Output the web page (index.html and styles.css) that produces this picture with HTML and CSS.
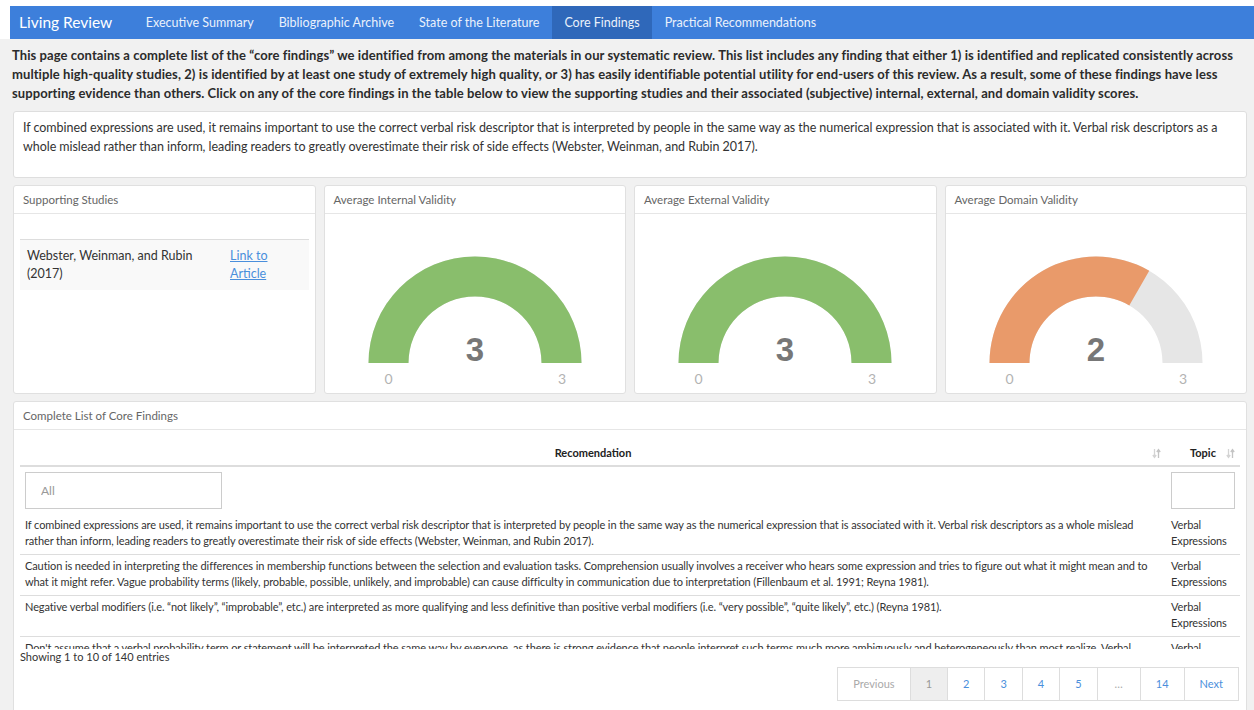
FILE: index.html
```html
<!DOCTYPE html>
<html lang="en">
<head>
<meta charset="utf-8">
<title>Living Review – Core Findings</title>
<link rel="stylesheet" href="styles.css">
</head>
<body>
<header class="top">
  <nav class="navbar">
    <span class="brand">Living Review</span>
    <ul class="nav">
      <li><a class="nav-link" href="#">Executive Summary</a></li>
      <li><a class="nav-link" href="#">Bibliographic Archive</a></li>
      <li><a class="nav-link" href="#">State of the Literature</a></li>
      <li><a class="nav-link active" href="#">Core Findings</a></li>
      <li><a class="nav-link" href="#">Practical Recommendations</a></li>
    </ul>
  </nav>
</header>

<main class="content">
  <p class="intro">This page contains a complete list of the “core findings” we identified from among the materials in our systematic review. This list includes any finding that either 1) is identified and replicated consistently across multiple high-quality studies, 2) is identified by at least one study of extremely high quality, or 3) has easily identifiable potential utility for end-users of this review. As a result, some of these findings have less supporting evidence than others. Click on any of the core findings in the table below to view the supporting studies and their associated (subjective) internal, external, and domain validity scores.</p>

  <div class="finding">
    <p>If combined expressions are used, it remains important to use the correct verbal risk descriptor that is interpreted by people in the same way as the numerical expression that is associated with it. Verbal risk descriptors as a whole mislead rather than inform, leading readers to greatly overestimate their risk of side effects (Webster, Weinman, and Rubin 2017).</p>
  </div>

  <div class="cards">
    <section class="card">
      <header class="card-head">Supporting Studies</header>
      <div class="card-body studies">
        <table class="studies-table">
          <tr>
            <td class="study-name">Webster, Weinman, and Rubin (2017)</td>
            <td class="study-link"><a href="#">Link to Article</a></td>
          </tr>
        </table>
      </div>
    </section>

    <section class="card">
      <header class="card-head">Average Internal Validity</header>
      <div class="card-body gauge">
        <svg viewBox="0 0 300 180" width="300" height="180">
          <path class="arc-track" d="M43.5 149 A106.5 106.5 0 0 1 256.5 149 L216.5 149 A66.5 66.5 0 0 0 83.5 149 Z"/>
          <path class="arc-good" d="M43.5 149 A106.5 106.5 0 0 1 256.5 149 L216.5 149 A66.5 66.5 0 0 0 83.5 149 Z"/>
          <text class="gauge-value" x="150" y="147">3</text>
          <text class="gauge-label" x="63.5" y="170">0</text>
          <text class="gauge-label" x="237" y="170">3</text>
        </svg>
      </div>
    </section>

    <section class="card">
      <header class="card-head">Average External Validity</header>
      <div class="card-body gauge">
        <svg viewBox="0 0 300 180" width="300" height="180">
          <path class="arc-track" d="M43.5 149 A106.5 106.5 0 0 1 256.5 149 L216.5 149 A66.5 66.5 0 0 0 83.5 149 Z"/>
          <path class="arc-good" d="M43.5 149 A106.5 106.5 0 0 1 256.5 149 L216.5 149 A66.5 66.5 0 0 0 83.5 149 Z"/>
          <text class="gauge-value" x="150" y="147">3</text>
          <text class="gauge-label" x="63.5" y="170">0</text>
          <text class="gauge-label" x="237" y="170">3</text>
        </svg>
      </div>
    </section>

    <section class="card">
      <header class="card-head">Average Domain Validity</header>
      <div class="card-body gauge">
        <svg viewBox="0 0 300 180" width="300" height="180">
          <path class="arc-track" d="M43.5 149 A106.5 106.5 0 0 1 256.5 149 L216.5 149 A66.5 66.5 0 0 0 83.5 149 Z"/>
          <path class="arc-mid" d="M43.5 149 A106.5 106.5 0 0 1 203.25 56.77 L183.25 91.41 A66.5 66.5 0 0 0 83.5 149 Z"/>
          <text class="gauge-value" x="150" y="147">2</text>
          <text class="gauge-label" x="63.5" y="170">0</text>
          <text class="gauge-label" x="237" y="170">3</text>
        </svg>
      </div>
    </section>
  </div>

  <section class="card list-card">
    <header class="card-head">Complete List of Core Findings</header>
    <div class="list-body">
      <table class="grid grid-head">
        <colgroup><col><col class="col-topic"></colgroup>
        <thead>
          <tr class="heading-row">
            <th><div class="th-inner"><span class="th-label">Recomendation</span><svg class="sort" viewBox="0 0 9 11" width="9" height="11"><path d="M2.5 1v8M0.8 7l1.7 2.3L4.2 7" /><path class="up" d="M6.5 10V2M4.8 4l1.7-2.3L8.2 4" /></svg></div></th>
            <th><div class="th-inner"><span class="th-label">Topic</span><svg class="sort" viewBox="0 0 9 11" width="9" height="11"><path d="M2.5 1v8M0.8 7l1.7 2.3L4.2 7" /><path class="up" d="M6.5 10V2M4.8 4l1.7-2.3L8.2 4" /></svg></div></th>
          </tr>
          <tr class="filter-row">
            <td><input class="filter filter-wide" type="text" placeholder="All"></td>
            <td><input class="filter" type="text"></td>
          </tr>
        </thead>
      </table>
      <div class="scroll-body">
        <table class="grid">
          <colgroup><col><col class="col-topic"></colgroup>
          <tbody>
            <tr><td>If combined expressions are used, it remains important to use the correct verbal risk descriptor that is interpreted by people in the same way as the numerical expression that is associated with it. Verbal risk descriptors as a whole mislead rather than inform, leading readers to greatly overestimate their risk of side effects (Webster, Weinman, and Rubin 2017).</td><td>Verbal Expressions</td></tr>
            <tr><td>Caution is needed in interpreting the differences in membership functions between the selection and evaluation tasks. Comprehension usually involves a receiver who hears some expression and tries to figure out what it might mean and to what it might refer. Vague probability terms (likely, probable, possible, unlikely, and improbable) can cause difficulty in communication due to interpretation (Fillenbaum et al. 1991; Reyna 1981).</td><td>Verbal Expressions</td></tr>
            <tr><td>Negative verbal modifiers (i.e. “not likely”, “improbable”, etc.) are interpreted as more qualifying and less definitive than positive verbal modifiers (i.e. “very possible”, “quite likely”, etc.) (Reyna 1981).</td><td>Verbal Expressions</td></tr>
            <tr><td>Don't assume that a verbal probability term or statement will be interpreted the same way by everyone, as there is strong evidence that people interpret such terms much more ambiguously and heterogeneously than most realize. Verbal probability expressions should be supplemented with numerical estimates wherever possible.</td><td>Verbal Expressions</td></tr>
            <tr><td>People tend to prefer to communicate uncertainty verbally, but prefer to receive it numerically.</td><td>Verbal Expressions</td></tr>
          </tbody>
        </table>
      </div>
      <div class="table-info">Showing 1 to 10 of 140 entries</div>
      <ul class="pager">
        <li class="page disabled">Previous</li>
        <li class="page current">1</li>
        <li class="page"><a href="#">2</a></li>
        <li class="page"><a href="#">3</a></li>
        <li class="page"><a href="#">4</a></li>
        <li class="page"><a href="#">5</a></li>
        <li class="page disabled ellipsis">…</li>
        <li class="page"><a href="#">14</a></li>
        <li class="page"><a href="#">Next</a></li>
      </ul>
    </div>
  </section>
</main>
</body>
</html>
```

FILE: styles.css
```css
* { box-sizing: border-box; }

body {
  margin: 0;
  background: #f1f1f1;
  font-family: Lato, "Noto Sans", sans-serif;
  color: #333333;
  min-height: 710px;
}

/* top navigation */
.top {
  background: #ffffff;
  padding: 6px 0 0 10px;
}

.navbar {
  display: flex;
  height: 33px;
  background: #3d7fdb;
}

.brand {
  color: #ffffff;
  font-size: 15.5px;
  line-height: 33px;
  padding: 0 21px 0 9px;
}

.nav {
  display: flex;
  list-style: none;
  margin: 0;
  padding: 0;
}

.nav-link {
  display: block;
  padding: 0 12.5px;
  line-height: 33px;
  font-size: 12.5px;
  color: #eaf1fb;
  text-decoration: none;
}

.nav-link.active {
  background: #2f68ba;
}

/* page body */
.content {
  padding: 7px 7px 0 13px;
}

.intro {
  margin: 0 0 8px -1px;
  font-size: 13px;
  font-weight: 700;
  line-height: 19px;
  letter-spacing: 0.08px;
  color: #2b2b2b;
}

.finding {
  background: #ffffff;
  border: 1px solid #dedede;
  border-radius: 3px;
  padding: 6px 9px 21px;
  margin-bottom: 7px;
  font-size: 12.5px;
  letter-spacing: -0.05px;
  line-height: 19px;
}

.finding p { margin: 0; }

.cards {
  display: grid;
  grid-template-columns: repeat(4, minmax(0, 1fr));
  gap: 8px;
  margin-bottom: 7px;
}

.card {
  background: #ffffff;
  border: 1px solid #e0e0e0;
  border-radius: 3px;
}

.card-head {
  height: 28px;
  border-bottom: 1px solid #e6e6e6;
  padding-left: 9px;
  font-size: 11.5px;
  line-height: 28px;
  color: #666666;
}

.card-body {
  height: 179px;
}

/* supporting studies */
.studies {
  padding: 25px 6px 0;
}

.studies-table {
  width: 100%;
  table-layout: fixed;
  border-collapse: collapse;
  border-top: 1px solid #dddddd;
  font-size: 12.5px;
  line-height: 18px;
}

.studies-table td {
  background: #f9f9f9;
  padding: 7px;
  vertical-align: top;
}

.study-name { width: 203px; }

.study-link a {
  color: #4a8fdc;
}

/* gauges */
.gauge {
  display: flex;
  justify-content: center;
}

.gauge svg { flex: none; }

.arc-track { fill: #e6e6e6; }
.arc-good { fill: #89be6c; }
.arc-mid { fill: #e99a6a; }

.gauge-value {
  font-family: "Liberation Sans", Arial, sans-serif;
  font-weight: 700;
  font-size: 33px;
  fill: #777777;
  text-anchor: middle;
}

.gauge-label {
  font-size: 14px;
  fill: #b3b3b3;
  text-anchor: middle;
}

/* findings table */
.list-body {
  padding: 7px 6px 12px;
}

.grid {
  width: 100%;
  border-collapse: collapse;
  table-layout: fixed;
  font-size: 11px;
  line-height: 16px;
}

.col-topic { width: 74px; }

.heading-row th {
  padding: 8px 5px 4px;
  border-bottom: 2px solid #dddddd;
  font-weight: 700;
  color: #222222;
}

.th-inner {
  display: grid;
  grid-template-columns: 1fr auto 1fr;
  align-items: center;
}

.th-label { grid-column: 2; }

.sort {
  grid-column: 3;
  justify-self: end;
  fill: none;
  stroke: #d4d4d4;
  stroke-width: 1.3;
}

.sort .up { stroke: #c4c4c4; }

.filter-row td {
  padding: 5px;
}

.filter {
  display: block;
  width: 100%;
  height: 37px;
  border: 1px solid #cccccc;
  padding: 0 15px;
  font-family: inherit;
  font-size: 12px;
  background: #ffffff;
}

.filter-wide { width: 197px; }

.filter::placeholder { color: #999999; }

.scroll-body {
  height: 135px;
  overflow: hidden;
}

.scroll-body td {
  padding: 3px 5px 5px;
  border-bottom: 1px solid #dddddd;
  vertical-align: top;
  letter-spacing: -0.1px;
}

.table-info {
  font-size: 11px;
  line-height: 16px;
}

.pager {
  display: flex;
  justify-content: flex-end;
  list-style: none;
  margin: 2px 1px 0 0;
  padding: 0;
  font-size: 11px;
}

.page {
  height: 34px;
  line-height: 32px;
  padding: 0 15px;
  border: 1px solid #dddddd;
  margin-left: -1px;
  background: #ffffff;
  color: #4a8fdc;
}

.page a {
  color: #4a8fdc;
  text-decoration: none;
}

.page.disabled { color: #aaaaaa; }
.page.current { background: #eeeeee; color: #999999; }
.page.ellipsis { padding: 0 17px; }
```
